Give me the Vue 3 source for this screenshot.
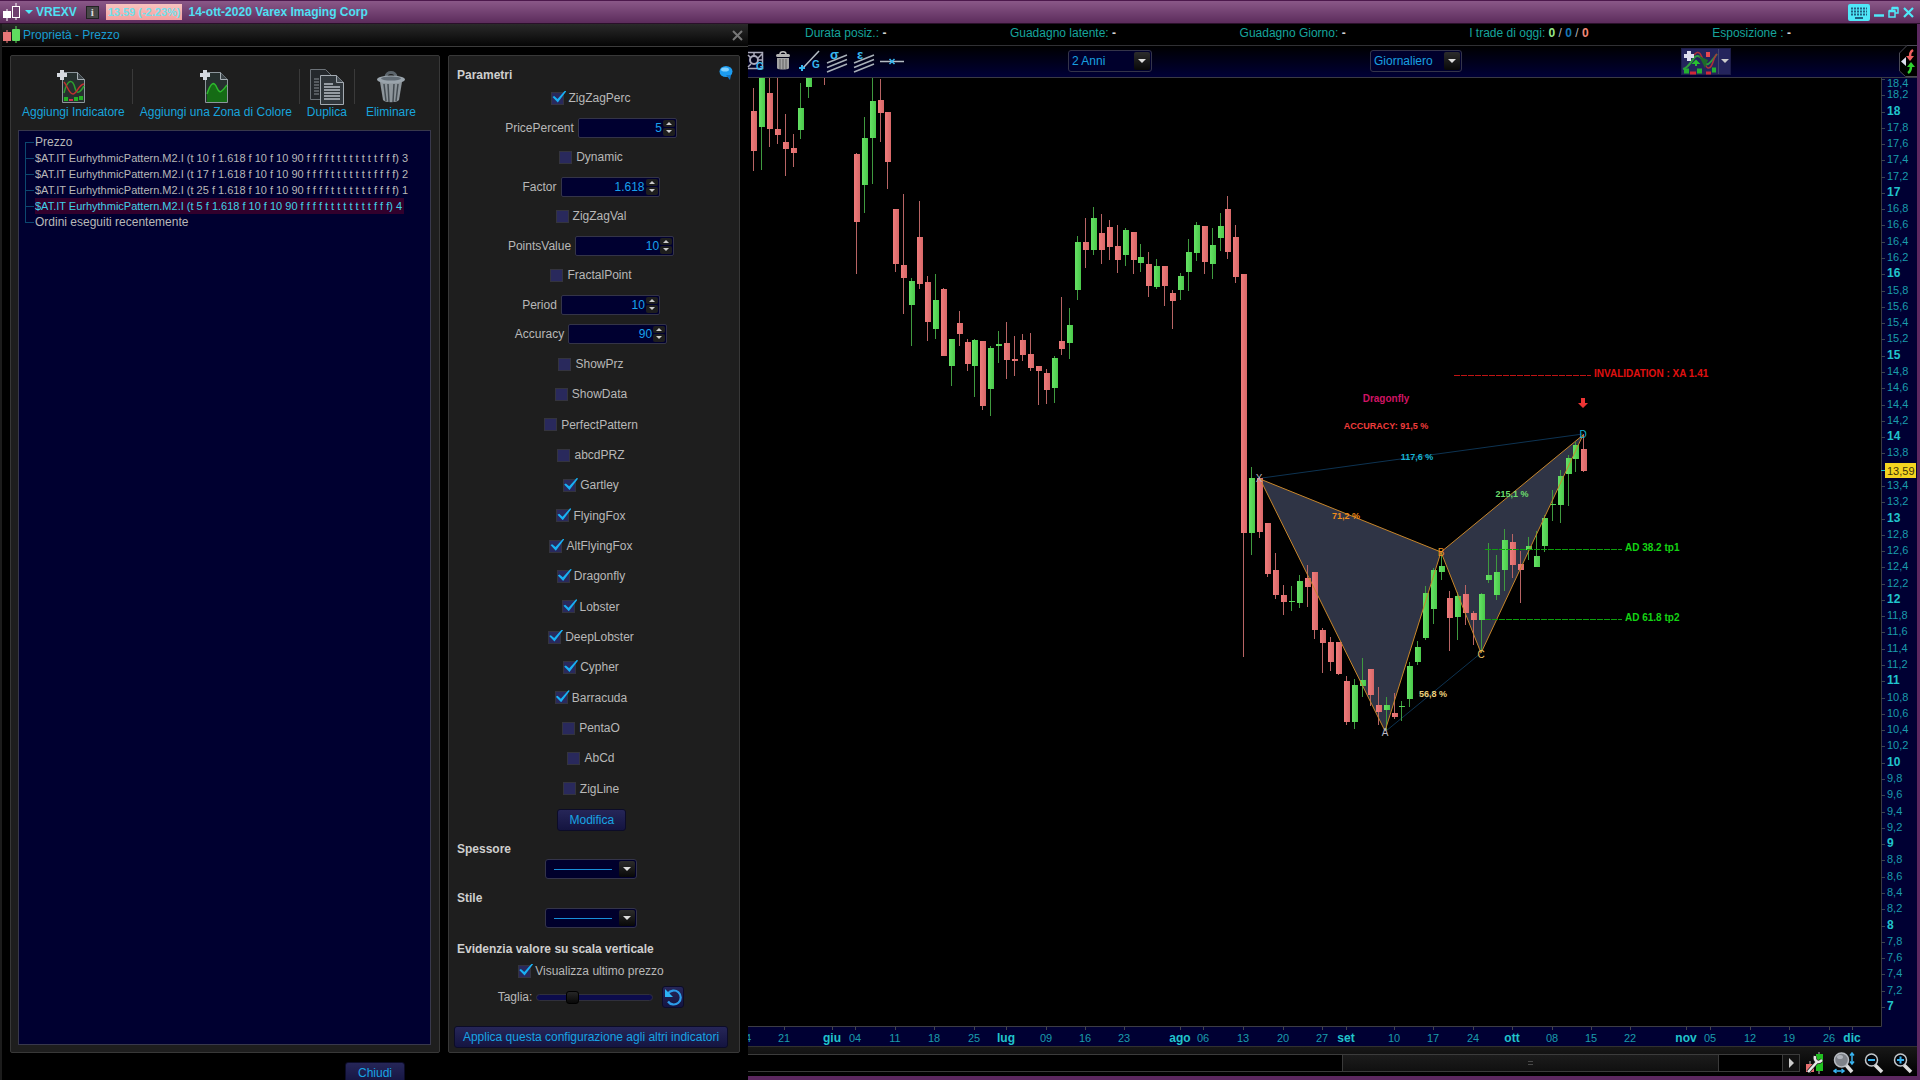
<script setup>
import { ref } from 'vue'

const treeItems = [
  { text: 'Prezzo' },
  { text: '$AT.IT EurhythmicPattern.M2.I (t 10 f 1.618 f 10 f 10 90 f f f f t t t t t t t t f f f) 3' },
  { text: '$AT.IT EurhythmicPattern.M2.I (t 17 f 1.618 f 10 f 10 90 f f f f t t t t t t t f f f f) 2' },
  { text: '$AT.IT EurhythmicPattern.M2.I (t 25 f 1.618 f 10 f 10 90 f f f f t t t t t t t f f f f) 1' },
  { text: '$AT.IT EurhythmicPattern.M2.I (t 5 f 1.618 f 10 f 10 90 f f f f t t t t t t t t f f f) 4', selected: true },
  { text: 'Ordini eseguiti recentemente' }
]

const topParams = ref([
  { name: 'ZigZagPerc', on: true },
  { name: 'PricePercent', value: '5' },
  { name: 'Dynamic', on: false },
  { name: 'Factor', value: '1.618' },
  { name: 'ZigZagVal', on: false },
  { name: 'PointsValue', value: '10' },
  { name: 'FractalPoint', on: false },
  { name: 'Period', value: '10' },
  { name: 'Accuracy', value: '90' }
])

const flags = ref([
  { name: 'ShowPrz', on: false },
  { name: 'ShowData', on: false },
  { name: 'PerfectPattern', on: false },
  { name: 'abcdPRZ', on: false },
  { name: 'Gartley', on: true },
  { name: 'FlyingFox', on: true },
  { name: 'AltFlyingFox', on: true },
  { name: 'Dragonfly', on: true },
  { name: 'Lobster', on: true },
  { name: 'DeepLobster', on: true },
  { name: 'Cypher', on: true },
  { name: 'Barracuda', on: true },
  { name: 'PentaO', on: false },
  { name: 'AbCd', on: false },
  { name: 'ZigLine', on: false }
])

const showLast = ref(true)
const size = ref(28)

function bump(p, d) {
  p.value = String(Math.round((Number(p.value) + d) * 1000) / 1000)
}

// session index, high, body top, body bottom, low (thirds of a chart unit), 1 = rising
const raw = [
  [0, 84, 153, 273, 333, 0], [1, 40, 45, 201, 330, 1], [2, 52, 98, 207, 261, 0], [3, 50, 207, 225, 251, 0],
  [4, 163, 247, 266, 347, 0], [5, 221, 264, 278, 321, 0], [6, 70, 144, 209, 236, 1], [7, 40, 45, 81, 113, 1],
  [9, 30, 36, 45, 75, 0], [13, 280, 281, 487, 643, 0], [14, 171, 234, 375, 458, 1], [15, 50, 123, 234, 371, 1],
  [16, 57, 120, 158, 245, 0], [17, 156, 156, 305, 388, 0], [18, 447, 447, 612, 637, 0], [19, 401, 615, 654, 763, 0],
  [20, 654, 664, 735, 857, 1], [21, 423, 531, 672, 688, 0], [22, 648, 667, 786, 842, 0], [23, 643, 720, 807, 837, 1],
  [24, 685, 688, 888, 888, 0], [25, 838, 838, 919, 979, 1], [26, 754, 789, 823, 859, 0], [27, 836, 845, 912, 934, 0],
  [28, 836, 840, 917, 1010, 1], [29, 843, 843, 1039, 1050, 0], [30, 859, 864, 987, 1067, 1], [31, 814, 853, 857, 908, 1],
  [32, 785, 849, 900, 957, 0], [33, 828, 898, 902, 948, 0], [34, 821, 840, 885, 904, 0], [35, 819, 882, 924, 932, 0],
  [36, 919, 919, 934, 1036, 0], [37, 928, 938, 990, 1031, 0], [38, 889, 893, 984, 1028, 1], [39, 711, 843, 867, 885, 0],
  [40, 744, 795, 850, 897, 1], [41, 529, 545, 691, 721, 1], [42, 473, 547, 570, 624, 0], [43, 442, 473, 571, 584, 1],
  [44, 463, 518, 571, 612, 0], [45, 480, 501, 561, 600, 0], [46, 495, 559, 600, 638, 0], [47, 505, 511, 585, 619, 1],
  [48, 516, 516, 600, 643, 0], [49, 552, 590, 609, 635, 1], [50, 576, 612, 678, 710, 0], [51, 597, 617, 681, 686, 1],
  [52, 618, 618, 678, 737, 0], [53, 689, 698, 723, 806, 0], [54, 640, 648, 690, 721, 1], [55, 538, 576, 636, 693, 1],
  [56, 486, 494, 578, 604, 1], [57, 497, 499, 606, 643, 0], [58, 505, 555, 612, 657, 1], [59, 460, 497, 534, 573, 1],
  [60, 408, 447, 576, 598, 0], [61, 495, 531, 651, 669, 0], [62, 643, 643, 1418, 1790, 0], [63, 1220, 1255, 1418, 1485, 1],
  [64, 1250, 1255, 1415, 1434, 0], [65, 1390, 1390, 1541, 1550, 0], [66, 1480, 1530, 1604, 1616, 0], [67, 1575, 1605, 1627, 1664, 0],
  [68, 1579, 1624, 1627, 1653, 1], [69, 1546, 1562, 1628, 1643, 1], [70, 1515, 1553, 1580, 1640, 0], [71, 1536, 1536, 1709, 1736, 0],
  [72, 1704, 1709, 1749, 1839, 0], [73, 1730, 1745, 1805, 1832, 0], [74, 1747, 1747, 1843, 1845, 0], [75, 1848, 1862, 1985, 1996, 0],
  [76, 1858, 1875, 1985, 2007, 1], [77, 1793, 1860, 1877, 1912, 1], [78, 1828, 1828, 1905, 1937, 0], [79, 1881, 1935, 1956, 1996, 0],
  [80, 1911, 1936, 1951, 2010, 1], [81, 1899, 1958, 1970, 1976, 0], [82, 1923, 1938, 1941, 1982, 1], [83, 1805, 1818, 1917, 1941, 1],
  [84, 1744, 1761, 1807, 1815, 1], [85, 1579, 1598, 1733, 1739, 1], [86, 1525, 1531, 1646, 1691, 1], [87, 1480, 1517, 1536, 1560, 1],
  [88, 1594, 1613, 1673, 1773, 0], [89, 1597, 1607, 1670, 1740, 1], [90, 1576, 1603, 1660, 1694, 0], [91, 1652, 1659, 1680, 1755, 0],
  [92, 1600, 1603, 1680, 1775, 1], [93, 1450, 1545, 1560, 1570, 1], [94, 1485, 1536, 1605, 1619, 1], [95, 1408, 1440, 1531, 1592, 1],
  [96, 1421, 1445, 1515, 1554, 0], [97, 1474, 1512, 1530, 1629, 0], [98, 1430, 1457, 1471, 1499, 1], [99, 1413, 1488, 1521, 1521, 1],
  [100, 1365, 1375, 1457, 1475, 1], [101, 1291, 1332, 1336, 1382, 1], [102, 1230, 1248, 1335, 1389, 1], [103, 1184, 1194, 1241, 1337, 1],
  [104, 1145, 1155, 1198, 1237, 1], [105, 1122, 1167, 1233, 1236, 0]
]
const toY = v => Math.round(60 + v / 3)
const candles = raw.map(([i, h, t, b, l, up]) => {
  const y = toY(t)
  return { x: Math.round(753 + i * 7.908), high: toY(h), y, h: Math.max(1, toY(b) - y), low: toY(l), up }
})

const priceTicks = []
for (let n = 92; n >= 35; n--) {
  if (n === 68) continue
  const major = n % 5 === 0
  const y = n === 92 ? 79 : Math.round(111.5 + (90 - n) * 16.28)
  priceTicks.push({ y, ly: n === 92 ? 87 : y + 3, major, text: major ? String(n / 5) : (n / 5).toFixed(1).replace('.', ',') })
}

const dateTicks = [
  [745, '14'], [784, '21'], [832, 'giu'], [855, '04'], [895, '11'], [934, '18'], [974, '25'], [1006, 'lug'],
  [1046, '09'], [1085, '16'], [1124, '23'], [1180, 'ago'], [1203, '06'], [1243, '13'], [1283, '20'], [1322, '27'],
  [1346, 'set'], [1394, '10'], [1433, '17'], [1473, '24'], [1512, 'ott'], [1552, '08'], [1591, '15'], [1630, '22'],
  [1686, 'nov'], [1710, '05'], [1750, '12'], [1789, '19'], [1829, '26'], [1852, 'dic']
].map(([x, text]) => ({ x, text, major: /[a-z]/.test(text) }))
</script>

<template>
  <div class="app">
    <header class="titlebar">
      <svg class="candle-logo" width="18" height="18" viewBox="0 0 18 18">
        <path d="M4 6v12M13 0v17" stroke="#fff" />
        <rect x="0" y="8" width="8" height="7" fill="#fff" />
        <rect x="9.500" y="3.500" width="7" height="11" fill="#6f3f6f" stroke="#fff" />
      </svg>
      <button class="symbol"><i class="caret"></i>VREXV</button>
      <button class="info" aria-label="Informazioni">i</button>
      <span class="quote">13.59 (-2.23%)</span>
      <span class="instrument">14-ott-2020 Varex Imaging Corp</span>
      <div class="win-actions">
        <button aria-label="Tastiera">
          <svg width="22" height="17" viewBox="0 0 22 17">
            <rect width="22" height="17" rx="2" fill="#4fe8f8" />
            <path d="M3 4.500h16M3 7.500h16M3 10.500h16" stroke="#206080" stroke-width="2" stroke-dasharray="2 1" />
            <path d="M7 14h8" stroke="#206080" stroke-width="2" />
          </svg>
        </button>
        <button aria-label="Riduci"><svg width="10" height="12" viewBox="0 0 10 12"><path d="M0 9.500h10" stroke="#4fe8f8" stroke-width="2.500" /></svg></button>
        <button aria-label="Ripristina">
          <svg width="11" height="12" viewBox="0 0 11 12"><path d="M4 4V2h6v5H7M1 5h6v6H1z" fill="none" stroke="#4fe8f8" stroke-width="1.500" /><path d="M4 2h6M1 5h6" stroke="#4fe8f8" stroke-width="2.500" /></svg>
        </button>
        <button aria-label="Chiudi finestra"><svg width="11" height="11" viewBox="0 0 11 11"><path d="M1 1l9 9M10 1l-9 9" stroke="#4fe8f8" stroke-width="2.200" /></svg></button>
      </div>
    </header>

    <main class="main">
      <section class="dialog">
        <div class="dialog-title">
          <svg width="18" height="18" viewBox="0 0 18 18">
            <path d="M4 4v13" stroke="#f08080" /><path d="M13 0v17" stroke="#5fe05f" />
            <rect x="0" y="6" width="8" height="9" fill="#e87878" />
            <rect x="9" y="3" width="8" height="12" rx="1" fill="#5fdc5f" />
          </svg>
          <h1>Proprietà - Prezzo</h1>
          <button class="close" aria-label="Chiudi pannello"><svg width="11" height="11" viewBox="0 0 11 11"><path d="M1 1l9 9M10 1l-9 9" stroke="#777" stroke-width="2" /></svg></button>
        </div>

        <div class="panels">
          <div class="panel objects">
            <div class="actions">
              <button class="action">
                <svg class="doc" width="34" height="36" viewBox="0 0 34 36">
                  <path d="M8.500 3.500h15l7 7v23h-22z" fill="#26302f" stroke="#8c969c" />
                  <path d="M23.500 3.500v7h7" fill="#3c4448" stroke="#a8b0b6" />
                  <path d="M10 24c4-16 9-13 11-5s6 3 9-2" fill="none" stroke="#2ea02e" stroke-width="1.500" />
                  <path d="M10 13c3 3 5 12 9 12s5-9 11-10" fill="none" stroke="#c03030" stroke-width="1.500" />
                  <path d="M10 30h4M20 30h4M25 29h4" stroke="#24b024" stroke-width="4" /><path d="M15 31h4" stroke="#d03050" stroke-width="2" />
                  <path d="M8 1v10M3 6h10" stroke="#d6dae0" stroke-width="4" />
                </svg>
                <span>Aggiungi Indicatore</span>
              </button>
              <i class="sep"></i>
              <button class="action">
                <svg class="doc" width="34" height="36" viewBox="0 0 34 36">
                  <path d="M8.500 3.500h15l7 7v23h-22z" fill="#26302f" stroke="#8c969c" />
                  <path d="M23.500 3.500v7h7" fill="#3c4448" stroke="#a8b0b6" />
                  <path d="M10 25c4-12 7-13 10-6s5 3 10-3v17H10z" fill="#156b15" />
                  <path d="M10 25c4-12 7-13 10-6s5 3 10-3" fill="none" stroke="#2eb82e" stroke-width="1.500" />
                  <path d="M8 1v10M3 6h10" stroke="#d6dae0" stroke-width="4" />
                </svg>
                <span>Aggiungi una Zona di Colore</span>
              </button>
              <i class="sep"></i>
              <button class="action">
                <svg width="36" height="36" viewBox="0 0 36 36">
                  <path d="M1.500.5h15l6 6v24h-21z" fill="#24282c" stroke="#6c7278" />
                  <path d="M5 10h5M5 13h5M5 16h5M5 19h5M5 22h5M5 25h5" stroke="#888e94" />
                  <path d="M11.500 6.500h16l7 7v22h-23z" fill="#30363b" stroke="#a4abb2" />
                  <path d="M27.500 6.500v7h7" fill="#454c52" stroke="#a4abb2" />
                  <path d="M15 15h9M15 18h16M15 21h16M15 24h16M15 27h16M15 30h16" stroke="#b8bec6" stroke-width="1.500" />
                </svg>
                <span>Duplica</span>
              </button>
              <i class="sep"></i>
              <button class="action">
                <svg width="30" height="36" viewBox="0 0 30 36">
                  <path d="M10 8c0-6 10-6 10 0" fill="none" stroke="#5c656c" stroke-width="3" />
                  <path d="M4 13h22l-3 18c-2 3-14 3-16 0z" fill="#8d959b" />
                  <path d="M8 15l2 17M12 15l1 18M18 15l-1 18M22 15l-2 17" stroke="#444c52" stroke-width="1.500" />
                  <ellipse cx="15" cy="10.500" rx="14" ry="4" fill="#9aa4ac" /><ellipse cx="15" cy="9.500" rx="10" ry="2" fill="#616b74" />
                </svg>
                <span>Eliminare</span>
              </button>
            </div>
            <ul class="tree">
              <li v-for="item in treeItems" :key="item.text" :class="{ selected: item.selected }"><span>{{ item.text }}</span></li>
            </ul>
          </div>

          <form class="panel params" @submit.prevent>
            <button type="button" class="bubble" aria-label="Aiuto">
              <svg width="14" height="14" viewBox="0 0 14 14"><ellipse cx="7" cy="5.500" rx="6.500" ry="5.500" fill="#1c9cf0" /><path d="M7 9h5l-1 5z" fill="#1478c8" /><ellipse cx="6" cy="3.500" rx="4" ry="2" fill="#7fd0ff" /></svg>
            </button>
            <h2>Parametri</h2>
            <template v-for="p in topParams" :key="p.name">
              <label v-if="p.value === undefined" class="check"><input v-model="p.on" type="checkbox" />{{ p.name }}</label>
              <div v-else class="number">
                <label :for="p.name">{{ p.name }}</label>
                <div class="spin">
                  <input :id="p.name" v-model="p.value" type="text" inputmode="decimal" />
                  <div class="steps">
                    <button type="button" :aria-label="p.name + ' +'" @click="bump(p, 1)"><i class="up"></i></button>
                    <button type="button" :aria-label="p.name + ' -'" @click="bump(p, -1)"><i class="down"></i></button>
                  </div>
                </div>
              </div>
            </template>
            <div class="flags">
              <label v-for="f in flags" :key="f.name" class="check"><input v-model="f.on" type="checkbox" />{{ f.name }}</label>
            </div>
            <button type="button" class="btn modify">Modifica</button>
            <h2 id="thickness">Spessore</h2>
            <div class="combo line">
              <select aria-labelledby="thickness"><option></option></select>
              <i class="stroke"></i><i class="arrow"></i>
            </div>
            <h2 id="linestyle" class="gap10">Stile</h2>
            <div class="combo line">
              <select aria-labelledby="linestyle"><option></option></select>
              <i class="stroke"></i><i class="arrow"></i>
            </div>
            <h2 class="gap12">Evidenzia valore su scala verticale</h2>
            <label class="check show-last"><input v-model="showLast" type="checkbox" />Visualizza ultimo prezzo</label>
            <div class="size-row">
              <label for="size">Taglia:</label>
              <input id="size" v-model="size" type="range" min="0" max="100" />
              <button type="button" class="btn reset" aria-label="Ripristina taglia">
                <svg width="17" height="17" viewBox="0 0 17 17"><path d="M3 4.500a7 7 0 1 1 0 8" fill="none" stroke="#2c9ce8" stroke-width="2.200" /><path d="M0 0v8h8z" fill="#2cb4f4" /></svg>
              </button>
            </div>
            <button type="button" class="btn apply">Applica questa configurazione agli altri indicatori</button>
          </form>
        </div>
        <div class="dialog-foot"><button class="btn">Chiudi</button></div>
      </section>

      <section class="chart">
        <div class="stats">
          <span>Durata posiz.: <b>-</b></span>
          <span>Guadagno latente: <b>-</b></span>
          <span>Guadagno Giorno: <b>-</b></span>
          <span>I trade di oggi: <b class="win">0</b> <em>/</em> <b class="flat">0</b> <em>/</em> <b class="loss">0</b></span>
          <span>Esposizione : <b>-</b></span>
        </div>

        <div class="toolbar">
          <div class="tools">
            <button aria-label="Gann">
              <svg width="16" height="22" viewBox="0 0 16 22"><path d="M0 2.500h14.500v16H0M0 5l3 3M14 4l-4 4M0 17l3-3M6 2v4M14 10h-3" fill="none" stroke="#aab" stroke-width="1.500" /><circle cx="6" cy="10" r="4" fill="none" stroke="#aab" stroke-width="2" /><text x="8" y="20" class="g">G</text></svg>
            </button>
            <button aria-label="Cestino">
              <svg width="16" height="20" viewBox="0 0 16 20"><path d="M5 3c0-3 6-3 6 0" fill="none" stroke="#bbb" stroke-width="1.500" /><rect x="1" y="3" width="14" height="3" rx="1.500" fill="#b4b4b4" /><path d="M2 7h12v10c0 2-12 2-12 0z" fill="#a4a4a4" /><path d="M5 8v10M8 8v10M11 8v10" stroke="#606060" /></svg>
            </button>
            <button aria-label="Linea">
              <svg width="22" height="22" viewBox="0 0 22 22"><path d="M3 19L20 1" stroke="#b4bcc4" stroke-width="1.500" /><path d="M0 18h6M3 15v6" stroke="#38b8f0" stroke-width="2" /><text x="13" y="18" class="g">G</text></svg>
            </button>
            <button aria-label="Canale sigma">
              <svg width="22" height="22" viewBox="0 0 22 22"><path d="M1 13L21 5M1 17.500l20-8M1 22l20-8" stroke="#a8b0b8" stroke-width="1.500" /><text x="4" y="9" class="sym">σ</text></svg>
            </button>
            <button aria-label="Canale epsilon">
              <svg width="22" height="22" viewBox="0 0 22 22"><path d="M1 13L21 5M1 17.500l20-8M1 22l20-8" stroke="#a8b0b8" stroke-width="1.500" /><text x="4" y="9" class="sym">ε</text></svg>
            </button>
            <button aria-label="Linea orizzontale">
              <svg width="24" height="22" viewBox="0 0 24 22"><path d="M0 11.500h24" stroke="#b4bcc4" stroke-width="1.500" /><path d="M9.500 9l5 5M14.500 9l-5 5" stroke="#38b8f0" stroke-width="1.500" /></svg>
            </button>
          </div>
          <div class="combo range">
            <select aria-label="Periodo"><option>2 Anni</option></select><i class="arrow"></i>
          </div>
          <div class="combo frame">
            <select aria-label="Intervallo"><option>Giornaliero</option></select><i class="arrow"></i>
          </div>
          <div class="indicator">
            <button aria-label="Aggiungi indicatore">
              <svg width="36" height="26" viewBox="0 0 36 26">
                <path d="M1 20C10 18 11 3 18 8s4 15 17-3" fill="none" stroke="#2d9a3c" stroke-width="2" />
                <path d="M12 6c8-10 9 12 14 13s5-11 9-14" fill="none" stroke="#b03038" stroke-width="1.500" />
                <path d="M17 7l6 12 3-8z" fill="#1d6a2a" />
                <path d="M2 22h5M15 22h5M30 21h4" stroke="#22b030" stroke-width="5" /><path d="M8 24h6M24 24h5" stroke="#d02838" stroke-width="3" />
                <path d="M14 13v4M12 14l2-2 2 2z" stroke="#28c030" stroke-width="2" fill="#28c030" /><path d="M26 3v5" stroke="#e84850" stroke-width="4" />
                <path d="M7 2v10M2 7h10" stroke="#dde" stroke-width="4" />
              </svg>
            </button>
            <button class="more" aria-label="Altri indicatori"><i class="down"></i></button>
          </div>
          <button class="dock" aria-label="Ordini">
            <svg width="18" height="32" viewBox="0 0 18 32">
              <path d="M18 .5H8L.5 8v18l6 5.500H18" fill="#000" stroke="#4a4a55" />
              <path d="M7 12v9l-5-4.500z" fill="#dde" />
              <path d="M14 5c-3 2-3 4-3 8" fill="none" stroke="#f06060" stroke-width="2.500" /><path d="M7 11h8l-4 5z" fill="#f06060" />
              <path d="M9 28c3-2 3-4 3-7" fill="none" stroke="#30d030" stroke-width="2.500" /><path d="M8 22h8l-4-5z" fill="#30d030" />
            </svg>
          </button>
        </div>

        <svg class="plot" viewBox="748 78 1169 968" preserveAspectRatio="xMidYMid meet">
          <defs>
            <linearGradient id="red" x1="0" x2="1"><stop offset="0" stop-color="#f07c7c" /><stop offset="1" stop-color="#d86868" /></linearGradient>
            <linearGradient id="green" x1="0" x2="1"><stop offset="0" stop-color="#66e266" /><stop offset="1" stop-color="#4ac94a" /></linearGradient>
          </defs>
          <rect x="1882" y="78" width="35" height="968" fill="#000033" />
          <rect x="748" y="1027" width="1169" height="19" fill="#000033" />
          <path d="M748 1026.500H1881.500V78" fill="none" stroke="#3c3c44" />

          <g fill="#2f3445">
            <path d="M1260 479L1385 731L1441 552z" /><path d="M1441 552L1481 653L1583 435z" />
          </g>
          <path d="M1262 478L1583 434M1386 731L1481 653" stroke="#0d3352" fill="none" />

          <g v-for="c in candles" :key="c.x" :class="c.up ? 'rise' : 'fall'">
            <path :d="`M${c.x + 0.5} ${c.high}V${c.low}`" />
            <rect :x="c.x - 2" :y="c.y" width="6" :height="c.h" />
          </g>

          <path d="M1260 479L1385 731L1441 552zM1441 552L1481 653L1583 435z" fill="none" stroke="#c8862a" />
          <path d="M1454 375.500H1591" stroke="#c01414" stroke-dasharray="6 1" />
          <path d="M1485 549.500H1622M1485 619.500H1622" stroke="#0ca00c" stroke-dasharray="6 1" />
          <path d="M1581 398h4v5h3l-5 5-5-5h3z" fill="#ee3434" />

          <g class="note">
            <text x="1594" y="377" fill="#e01010">INVALIDATION : XA 1.41</text>
            <text x="1625" y="551" fill="#14d414">AD 38.2 tp1</text>
            <text x="1625" y="621" fill="#14d414">AD 61.8 tp2</text>
            <text x="1386" y="402" fill="#d01464" class="mid">Dragonfly</text>
          </g>
          <g class="note small mid">
            <text x="1386" y="429" fill="#f03c3c">ACCURACY: 91,5 %</text>
            <text x="1417" y="460" fill="#18b4d4">117,6 %</text>
            <text x="1346" y="519" fill="#f08c1c">71,2 %</text>
            <text x="1512" y="497" fill="#6cdc6c">215,1 %</text>
            <text x="1433" y="697" fill="#ecd07c">56,8 %</text>
          </g>
          <g class="node mid">
            <text x="1259" y="482" fill="#b8b8c4">X</text>
            <text x="1385" y="736" fill="#b8b8c4">A</text>
            <text x="1441" y="556" fill="#f09020">B</text>
            <text x="1481" y="658" fill="#ecc060">C</text>
            <text x="1583" y="438" fill="#18b4d4">D</text>
          </g>

          <g v-for="t in priceTicks" :key="t.text">
            <path :d="`M1881 ${t.y + 0.5}h4`" stroke="#3c4450" />
            <text x="1887" :y="t.ly" :class="t.major ? 'major' : 'minor'">{{ t.text }}</text>
          </g>
          <path d="M1881 470.500h4" stroke="#20c0c8" />
          <rect x="1885" y="463" width="31" height="15" fill="#f4d420" />
          <text x="1887" y="475" class="last-price">13,59</text>

          <g v-for="t in dateTicks" :key="t.x" class="mid">
            <path :d="`M${t.x + 0.5} 1027v3`" stroke="#44444e" />
            <text :x="t.x" y="1042" :class="t.major ? 'major' : 'minor'">{{ t.text }}</text>
          </g>
        </svg>

        <footer class="scroll">
          <div class="track"><i class="before"></i><div class="handle"><i class="grip"></i></div><i class="after"></i></div>
          <button class="next" aria-label="Avanti"><i></i></button>
          <div class="zooms">
            <button aria-label="Impostazioni grafico">
              <svg width="18" height="22" viewBox="0 0 18 22"><path d="M4 9v12M13 0v22" stroke="#bbb" /><rect x="0" y="12" width="8" height="8" fill="#e87070" /><rect x="10" y="2" width="7" height="17" fill="#20c020" /><path d="M2 20L11 10M9 4c-1 5 3 8 7 4" stroke="#222" stroke-width="4" fill="none" /><path d="M2 20L11 10M9 4c-1 5 3 8 7 4" stroke="#e8e8e8" stroke-width="2.500" fill="none" /></svg>
            </button>
            <button aria-label="Adatta scala">
              <svg width="22" height="22" viewBox="0 0 22 22"><path d="M13 13l6 7" stroke="#ddd" stroke-width="3.500" /><circle cx="8.500" cy="8" r="7" fill="#7e8289" stroke="#b8bcc2" stroke-width="1.500" /><ellipse cx="7" cy="5" rx="3" ry="2" fill="#aeb2ba" /><path d="M19 1v11M17 3.500l2-2.500 2 2.500M17 9.500l2 2.500 2-2.500M1 19h10M3.500 17L1 19l2.500 2M8.500 17l2.500 2-2.500 2" fill="none" stroke="#38b4f0" stroke-width="1.500" /></svg>
            </button>
            <button aria-label="Riduci zoom">
              <svg width="20" height="22" viewBox="0 0 20 22"><path d="M11 13l7 7" stroke="#ddd" stroke-width="3.500" /><circle cx="7.500" cy="8" r="6" fill="#02060c" stroke="#c4c8cc" stroke-width="1.500" /><path d="M4 8h7" stroke="#38b4f0" stroke-width="2" /></svg>
            </button>
            <button aria-label="Aumenta zoom">
              <svg width="20" height="22" viewBox="0 0 20 22"><path d="M11 13l7 7" stroke="#ddd" stroke-width="3.500" /><circle cx="7.500" cy="8" r="6" fill="#02060c" stroke="#c4c8cc" stroke-width="1.500" /><path d="M4 8h7M7.500 4.500v7" stroke="#38b4f0" stroke-width="2" /></svg>
            </button>
          </div>
        </footer>
      </section>
    </main>
  </div>
</template>

<style>
body {
  margin: 0;
  background: #000;
}
</style>

<style scoped>
.app, .app * {
  box-sizing: border-box;
}
.app {
  display: flex;
  flex-direction: column;
  height: 100vh;
  overflow: hidden;
  background: #000;
  color: #b8b8b8;
  font: 12px "Liberation Sans", Arial, sans-serif;
  white-space: nowrap;
}
button, input, select {
  font: inherit;
  color: inherit;
  margin: 0;
}
button {
  padding: 0;
  border: 0;
  background: none;
}
svg {
  display: block;
}
h1, h2, ul {
  margin: 0;
  padding: 0;
  font-size: 12px;
}

/* title bar */
.titlebar {
  display: flex;
  align-items: center;
  height: 24px;
  padding: 0 6px 0 3px;
  border-top: 1px solid #4c184c;
  border-bottom: 1px solid #2a102a;
  background: linear-gradient(#8a5888, #5c2c5c);
  color: #4fe0f4;
  font-weight: bold;
}
.symbol {
  display: flex;
  align-items: center;
  gap: 3px;
  margin-left: 4px;
  font-weight: bold;
}
.caret {
  border: 4px solid transparent;
  border-top-color: #4fe8f8;
  border-bottom: 0;
}
.info {
  width: 13px;
  height: 13px;
  margin-left: 9px;
  border: 1px solid #222;
  background: #484848;
  color: #ddd;
  font: bold 11px/11px "Liberation Serif", serif;
}
.quote {
  margin-left: 7px;
  padding: 0 2px;
  background: linear-gradient(#f8c4c0, #f4a0a0);
  color: #70e0ec;
  font: bold 11px/16px "Liberation Sans", Arial, sans-serif;
}
.instrument {
  margin-left: 6px;
}
.win-actions {
  display: flex;
  align-items: center;
  gap: 4px;
  margin-left: auto;
}

.main {
  display: flex;
  flex: 1;
  min-height: 0;
}

/* properties dialog */
.dialog {
  display: flex;
  flex-direction: column;
  flex: 0 0 748px;
  border-left: 2px solid #1c1c1c;
}
.dialog-title {
  display: flex;
  align-items: center;
  gap: 2px;
  height: 23px;
  padding: 0 5px 0 1px;
  border-bottom: 1px solid #3c3c3c;
  background: linear-gradient(#2a2a2a, #050505);
}
.dialog-title h1 {
  color: #189cd0;
  font-weight: normal;
}
.close {
  margin-left: auto;
}
.panels {
  display: flex;
  flex: 1;
  gap: 8px;
  min-height: 0;
  padding: 8px 8px 0;
}
.panel {
  border: 1px solid #383838;
  border-radius: 2px;
  background: #1e1e1e;
}
.objects {
  display: flex;
  flex: 1;
  flex-direction: column;
  min-width: 0;
  padding: 12px 8px 7px 7px;
}
.actions {
  display: flex;
  gap: 7px;
  height: 62px;
  padding-left: 4px;
}
.action {
  display: flex;
  flex-direction: column;
  align-items: center;
  padding-top: 1px;
  color: #18a4dc;
}
.action:last-child {
  margin-left: 4px;
}
.action .doc {
  margin-right: 4px;
}
.sep {
  width: 1px;
  height: 35px;
  margin-top: 1px;
  background: #3a3a3a;
}
.tree {
  flex: 1;
  padding: 3px 0 0 6px;
  overflow: hidden;
  border: 1px solid #38384c;
  background: #000030;
  list-style: none;
}
.tree li {
  position: relative;
  height: 16px;
  padding-left: 10px;
  font-size: 11px;
  line-height: 16px;
}
.tree li:first-child, .tree li:last-child {
  font-size: 12px;
}
.tree li::before {
  position: absolute;
  top: 0;
  left: 0;
  width: 1px;
  height: 16px;
  background: #0c4870;
  content: "";
}
.tree li::after {
  position: absolute;
  top: 8px;
  left: 0;
  width: 9px;
  height: 1px;
  background: #0c4870;
  content: "";
}
.tree li:first-child::before {
  top: 8px;
  height: 8px;
}
.tree li:last-child::before {
  height: 8px;
}
.tree .selected span {
  display: inline-block;
  padding-right: 2px;
  background: #32002c;
  color: #40d0e8;
}

.params {
  position: relative;
  display: flex;
  flex: 0 0 292px;
  flex-direction: column;
  padding: 10px 11px 4px 5px;
}
.params h2 {
  height: 18px;
  padding-left: 3px;
  color: #cfcfcf;
  line-height: 18px;
}
.params h2:first-of-type {
  height: 17px;
}
.params h2.gap10 {
  margin-top: 10px;
}
.params h2.gap12 {
  margin-top: 12px;
}
.bubble {
  position: absolute;
  top: 10px;
  right: 6px;
}
.check {
  display: flex;
  align-items: center;
  justify-content: center;
  gap: 4px;
  height: 30px;
}
.check input {
  position: relative;
  width: 13px;
  height: 13px;
  border: 1px solid #34343e;
  background: #29295c;
  appearance: none;
}
.check input:checked::after {
  position: absolute;
  top: -2px;
  left: 0;
  width: 14px;
  height: 12px;
  background: #18b0f4;
  clip-path: polygon(0 54%, 12% 46%, 36% 70%, 90% 0, 100% 4%, 38% 100%);
  content: "";
}
.number {
  display: flex;
  align-items: center;
  justify-content: center;
  gap: 4px;
  height: 29px;
}
.spin {
  display: flex;
  width: 99px;
  height: 20px;
  border: 1px solid #343448;
  border-radius: 2px;
  background: #000030;
}
.spin input {
  flex: 1;
  min-width: 0;
  padding: 0;
  border: 0;
  background: none;
  color: #18a0ec;
  text-align: right;
}
.steps {
  display: flex;
  flex-direction: column;
  gap: 1px;
  padding: 1px;
}
.steps button {
  display: flex;
  flex: 1;
  align-items: center;
  justify-content: center;
  width: 12px;
  border-radius: 2px;
  background: #1e1e1e;
}
.up, .down {
  border: 3px solid transparent;
}
.up {
  border-top: 0;
  border-bottom-color: #ccc;
}
.down {
  border-bottom: 0;
  border-top-color: #ccc;
}
.flags {
  display: flex;
  flex: 1;
  flex-direction: column;
  min-height: 0;
  padding-top: 1px;
}
.flags .check {
  flex: 1;
  height: auto;
}
.btn {
  height: 22px;
  padding: 0 12px;
  border: 1px solid #0c0c28;
  border-radius: 3px;
  background: linear-gradient(#262658, #141440);
  color: #18a4e4;
}
.modify {
  align-self: center;
  width: 69px;
  margin: 5px 0 9px;
}
.combo {
  position: relative;
  height: 22px;
}
.combo select {
  width: 100%;
  height: 100%;
  padding: 0 3px;
  border: 1px solid #34344a;
  border-radius: 3px;
  background: #00002c;
  color: #18a0e0;
  appearance: none;
}
.combo .arrow {
  position: absolute;
  top: 2px;
  right: 2px;
  bottom: 2px;
  width: 16px;
  border-radius: 2px;
  background: linear-gradient(#2c2c2c, #080808);
  pointer-events: none;
}
.combo .arrow::after {
  position: absolute;
  top: 50%;
  left: 4px;
  margin-top: -2px;
  border: 4px solid transparent;
  border-top-color: #ddd;
  border-bottom: 0;
  content: "";
}
.combo.line {
  align-self: center;
  width: 92px;
  height: 20px;
  margin-top: 1px;
}
.combo .stroke {
  position: absolute;
  top: 10px;
  left: 9px;
  width: 58px;
  height: 1px;
  background: #1890d8;
  pointer-events: none;
}
.check.show-last {
  height: 20px;
  margin-top: 3px;
}
.size-row {
  display: flex;
  align-items: center;
  justify-content: center;
  height: 22px;
  margin: 5px 0 18px;
}
.size-row input {
  width: 117px;
  height: 13px;
  margin: 0 9px 0 4px;
  background: none;
  appearance: none;
}
.size-row input::-webkit-slider-runnable-track {
  height: 7px;
  border: 1px solid #30303c;
  border-radius: 4px;
  background: #0c0c4c;
}
.size-row input::-webkit-slider-thumb {
  width: 13px;
  height: 13px;
  margin-top: -4px;
  border: 1px solid #000;
  border-radius: 3px;
  background: linear-gradient(#262626, #080808);
  appearance: none;
}
.reset {
  display: flex;
  align-items: center;
  justify-content: center;
  width: 22px;
  padding: 0;
}
.apply {
  padding: 0;
}
.dialog-foot {
  display: flex;
  justify-content: center;
  align-items: flex-start;
  height: 27px;
  padding-top: 9px;
}

/* chart side */
.chart {
  display: flex;
  flex: 1;
  flex-direction: column;
  min-width: 0;
  border: solid #5c2860;
  border-width: 0 3px 4px 0;
}
.stats {
  display: flex;
  align-items: center;
  justify-content: space-between;
  height: 22px;
  padding: 0 126px 3px 57px;
  border-bottom: 1px solid #303034;
  color: #16a49c;
}
.stats b {
  color: #d4d4d4;
}
.stats em {
  color: #b4b4b4;
  font-style: normal;
}
.stats .win {
  color: #98e888;
}
.stats .flat {
  color: #1878b8;
}
.stats .loss {
  color: #f08878;
}
.toolbar {
  display: flex;
  align-items: center;
  height: 32px;
  padding-bottom: 1px;
  border-bottom: 1px solid #3a3a44;
  background: linear-gradient(#000, #000036);
}
.tools {
  display: flex;
  align-items: center;
  gap: 5px;
  flex: 0 0 320px;
}
.tools button:nth-child(2) {
  margin: 0 3px 0 6px;
}
.tools svg {
  overflow: visible;
}
.g, .sym {
  fill: #38b8f0;
  font: bold 10px "Liberation Sans", Arial, sans-serif;
}
.sym {
  font-size: 13px;
}
.range {
  width: 84px;
}
.frame {
  width: 92px;
  margin-left: 218px;
}
.indicator {
  display: flex;
  height: 27px;
  margin-left: auto;
  border: 1px solid #1c1c48;
  background: #24245c;
}
.more {
  display: flex;
  align-items: center;
  justify-content: center;
  width: 12px;
  border-left: 1px solid #44446c;
}
.more .down {
  border-width: 4px;
  border-bottom: 0;
}
.dock {
  margin-left: 168px;
}
.plot {
  flex: 1;
  width: 100%;
  min-height: 0;
}
.rise path {
  stroke: #3f9a3f;
}
.rise rect {
  fill: url(#green);
}
.fall path {
  stroke: #b86464;
}
.fall rect {
  fill: url(#red);
}
.mid {
  text-anchor: middle;
}
.note {
  font: bold 10px "Liberation Sans", Arial, sans-serif;
}
.note.small {
  font-size: 9px;
}
.node {
  font-size: 10px;
}
.minor {
  fill: #1a9cac;
  font-size: 11px;
}
.major {
  fill: #20c4cc;
  font-weight: bold;
  font-size: 12px;
}
.last-price {
  fill: #3c3408;
  font-size: 11px;
}
.scroll {
  display: flex;
  align-items: center;
  height: 30px;
  padding: 0 4px 2px 0;
  border-top: 1px solid #303030;
  background: linear-gradient(#181818, #000);
}
.track {
  display: flex;
  flex: 1;
  height: 18px;
  margin-top: 4px;
  border: 1px solid #3c3c3c;
  border-left: 0;
  background: #000;
}
.before {
  flex: 596;
}
.handle {
  display: flex;
  flex: 376;
  align-items: center;
  justify-content: center;
  border: solid #3a3a3a;
  border-width: 0 1px;
  background: linear-gradient(#1c1c1c, #101010);
}
.grip {
  width: 5px;
  height: 4px;
  border: solid #484848;
  border-width: 1px 0;
}
.after {
  flex: 63;
}
.next {
  display: flex;
  align-items: center;
  justify-content: center;
  width: 17px;
  height: 18px;
  margin-top: 4px;
  border: 1px solid #3c3c3c;
  border-left: 0;
  background: #111;
}
.next i {
  border: 5px solid transparent;
  border-left-color: #ccc;
  border-right: 0;
}
.zooms {
  display: flex;
  gap: 9px;
  margin: 4px 0 0 6px;
}
</style>
